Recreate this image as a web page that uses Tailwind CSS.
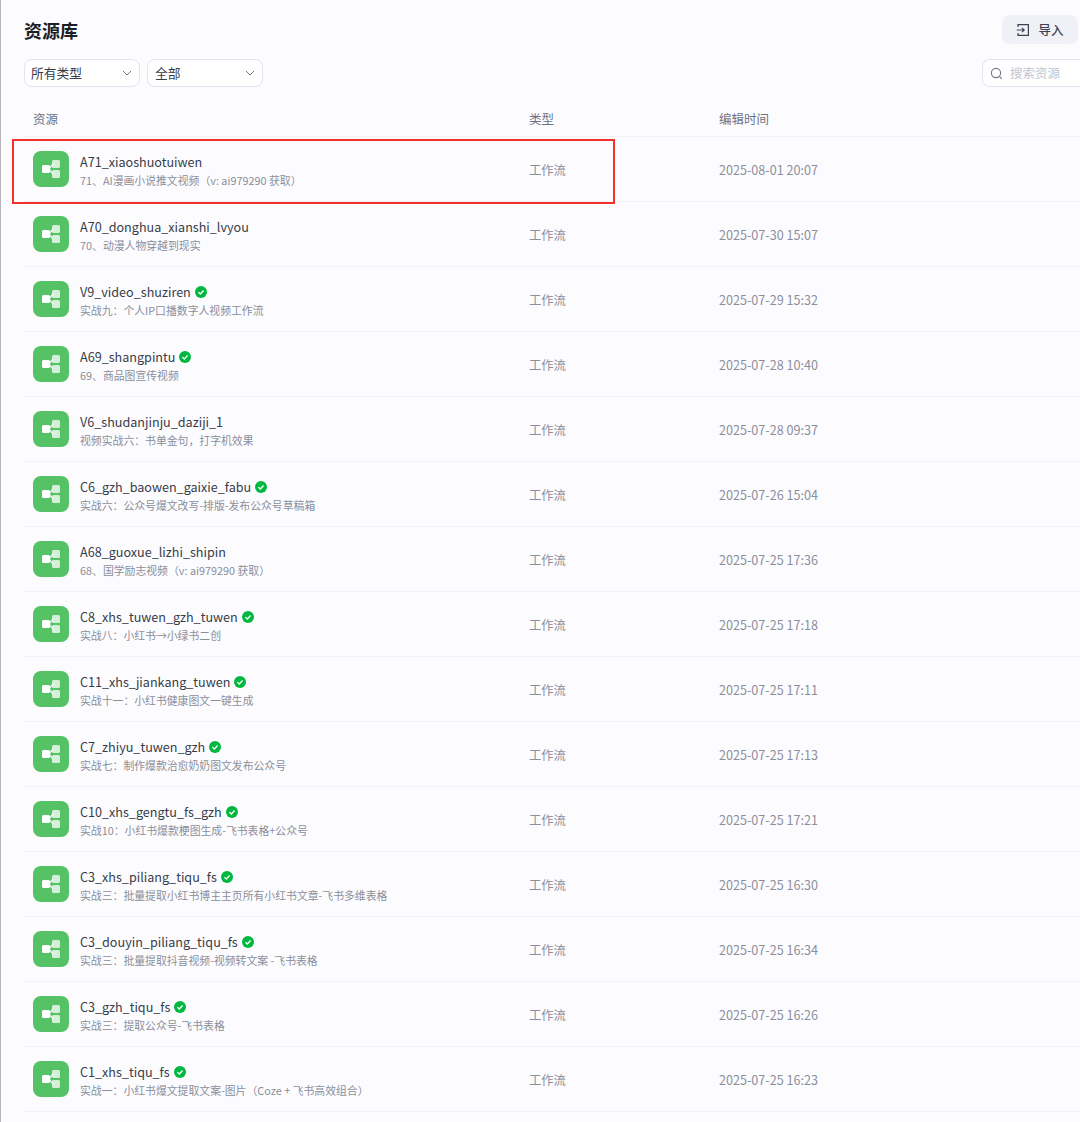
<!DOCTYPE html>
<html lang="zh-CN">
<head>
    <meta charset="UTF-8">
    <meta name="viewport" content="width=device-width, initial-scale=1.0">
    <title>资源库</title>
    <script src="https://cdn.jsdelivr.net/npm/@tailwindcss/browser@4"></script>
</head>
<body class="bg-[#fcfcff] overflow-hidden font-['Noto_Sans_CJK_SC','Noto_Sans',sans-serif]">
    <div class="relative h-[1122px] w-[1080px] overflow-hidden border-l border-[#b4b4b8]">
        <div class="pl-[23px]">
            <!-- Header -->
            <div class="flex h-[59px] items-start justify-between">
                <h1 class="mt-[16px] text-[18px] leading-[28px] font-semibold text-[#1c1f28]">资源库</h1>
                <button class="mt-[15px] mr-[2px] flex h-[29px] w-[76px] items-center justify-center gap-[8px] rounded-lg bg-[#f0f1f7] text-[12.5px] font-medium text-[#3c4150]">
                    <svg class="h-[14px] w-[14px]" viewBox="0 0 14 14" fill="none" stroke="#3c4150" stroke-width="1.2">
                        <path d="M2 4V1.6h10.4v10.8H2V10"/>
                        <path d="M0.8 7H8M6 4.8 8.2 7 6 9.2"/>
                    </svg>
                    <span class="pt-[2px]">导入</span>
                </button>
            </div>

            <!-- Filters -->
            <div class="flex h-[28px] items-center justify-between">
                <div class="flex gap-[7px]">
                    <div class="flex h-[28px] w-[116px] items-center justify-between rounded-lg border border-[#e3e4ee] bg-white pr-[7px] pl-[6px] text-[12.75px] text-[#383c48]">
                        <span>所有类型</span>
                        <svg class="h-[10px] w-[10px]" viewBox="0 0 10 10" fill="none" stroke="#73778a" stroke-width="1"><path d="M1 3l4 4 4-4"/></svg>
                    </div>
                    <div class="flex h-[28px] w-[116px] items-center justify-between rounded-lg border border-[#e3e4ee] bg-white pr-[7px] pl-[7px] text-[12.75px] text-[#383c48]">
                        <span>全部</span>
                        <svg class="h-[10px] w-[10px]" viewBox="0 0 10 10" fill="none" stroke="#73778a" stroke-width="1"><path d="M1 3l4 4 4-4"/></svg>
                    </div>
                </div>
                <div class="flex h-[28px] w-[98px] shrink-0 items-center gap-[7px] rounded-l-lg border border-r-0 border-[#e3e4ee] bg-white pl-[7px] text-[12.5px] whitespace-nowrap text-[#c3c5d2]">
                    <svg class="h-[13px] w-[13px]" viewBox="0 0 13 13" fill="none" stroke="#73778a" stroke-width="1.1"><circle cx="6" cy="6" r="4.6"/><path d="M9.4 9.4l2.4 2.4"/></svg>
                    <span>搜索资源</span>
                </div>
            </div>

            <!-- Table head -->
            <div class="mt-[18px] grid h-[32px] grid-cols-[496px_190px_1fr] border-b border-[#f1f1f6] pl-[9px] text-[12.5px] leading-[28px] text-[#6f7280]">
                <span>资源</span>
                <span>类型</span>
                <span>编辑时间</span>
            </div>

            <div id="rows"></div>
        </div>

        <!-- Red highlight box -->
        <div class="pointer-events-none absolute top-[139px] left-[11px] h-[65px] w-[603px] border-2 border-[#f5302a]"></div>
    </div>

    <script>
        const rows = [
            ['A71_xiaoshuotuiwen', '71、AI漫画小说推文视频（v: ai979290 获取）', '2025-08-01 20:07', false],
            ['A70_donghua_xianshi_lvyou', '70、动漫人物穿越到现实', '2025-07-30 15:07', false],
            ['V9_video_shuziren', '实战九：个人IP口播数字人视频工作流', '2025-07-29 15:32', true],
            ['A69_shangpintu', '69、商品图宣传视频', '2025-07-28 10:40', true],
            ['V6_shudanjinju_daziji_1', '视频实战六：书单金句，打字机效果', '2025-07-28 09:37', false],
            ['C6_gzh_baowen_gaixie_fabu', '实战六：公众号爆文改写-排版-发布公众号草稿箱', '2025-07-26 15:04', true],
            ['A68_guoxue_lizhi_shipin', '68、国学励志视频（v: ai979290 获取）', '2025-07-25 17:36', false],
            ['C8_xhs_tuwen_gzh_tuwen', '实战八：小红书→小绿书二创', '2025-07-25 17:18', true],
            ['C11_xhs_jiankang_tuwen', '实战十一：小红书健康图文一键生成', '2025-07-25 17:11', true],
            ['C7_zhiyu_tuwen_gzh', '实战七：制作爆款治愈奶奶图文发布公众号', '2025-07-25 17:13', true],
            ['C10_xhs_gengtu_fs_gzh', '实战10：小红书爆款梗图生成-飞书表格+公众号', '2025-07-25 17:21', true],
            ['C3_xhs_piliang_tiqu_fs', '实战三：批量提取小红书博主主页所有小红书文章-飞书多维表格', '2025-07-25 16:30', true],
            ['C3_douyin_piliang_tiqu_fs', '实战三：批量提取抖音视频-视频转文案 -飞书表格', '2025-07-25 16:34', true],
            ['C3_gzh_tiqu_fs', '实战三：提取公众号-飞书表格', '2025-07-25 16:26', true],
            ['C1_xhs_tiqu_fs', '实战一：小红书爆文提取文案-图片（Coze + 飞书高效组合）', '2025-07-25 16:23', true]
        ];

        const badge = `<svg class="h-[12px] w-[12px] shrink-0" viewBox="0 0 12 12"><circle cx="6" cy="6" r="6" fill="#00b83f"/><path d="M3.4 6.1 5.3 8l3.3-3.5" fill="none" stroke="#fff" stroke-width="1.3"/></svg>`;

        const icon = `<div class="flex h-[36px] w-[36px] shrink-0 items-center justify-center rounded-lg bg-[#55c266]">
            <svg class="h-[20px] w-[20px]" viewBox="0 0 20 20">
                <path d="M8 10 12 5M8 10 12 15" stroke="#fff" stroke-opacity=".85" stroke-width="1.4" fill="none"/>
                <rect x="1" y="6" width="8" height="8" rx="1.5" fill="#fff"/>
                <rect x="11" y="1" width="8" height="8" rx="1.5" fill="#fff" fill-opacity=".75"/>
                <rect x="11" y="11" width="8" height="8" rx="1.5" fill="#fff" fill-opacity=".75"/>
            </svg>
        </div>`;

        document.getElementById('rows').innerHTML = rows.map(([name, desc, time, ok]) => `
            <div class="grid h-[65px] grid-cols-[496px_190px_1fr] items-center border-b border-[#f1f1f6] pl-[9px]">
                <div class="flex items-center gap-[11px]">
                    ${icon}
                    <div class="min-w-0 pt-[2px]">
                        <div class="flex items-center gap-[4px] text-[12.6px] leading-[18px] text-[#383c48]"><span>${name}</span>${ok ? badge : ''}</div>
                        <div class="mt-[1px] text-[10.85px] leading-[16px] whitespace-nowrap text-[#8b8e9b]">${desc}</div>
                    </div>
                </div>
                <span class="pt-[2px] text-[12.3px] text-[#8b8e9b]">工作流</span>
                <span class="pt-[2px] text-[12.6px] text-[#8b8e9b]">${time}</span>
            </div>`).join('');
    </script>
</body>
</html>
